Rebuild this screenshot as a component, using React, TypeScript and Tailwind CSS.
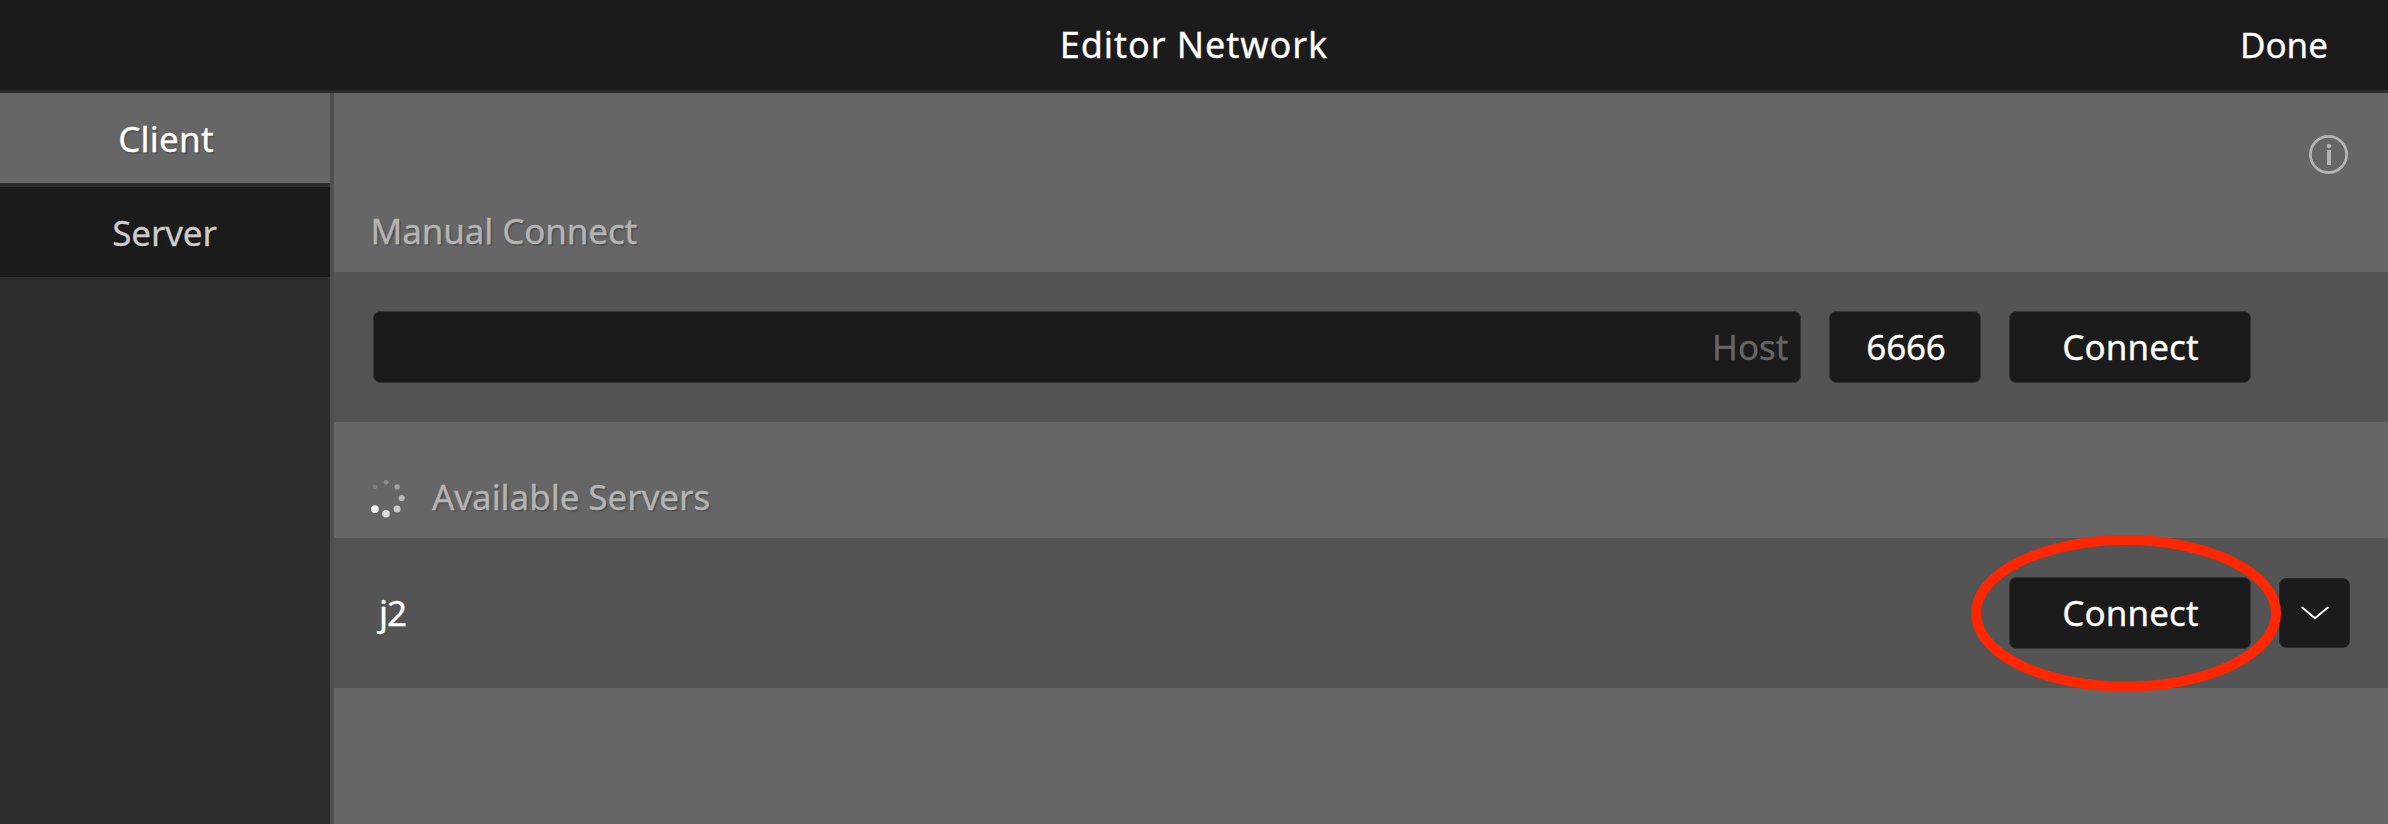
import type { ReactNode } from "react";

const box =
  "flex h-18 shrink-0 items-center justify-center rounded-[7px] border border-[#353535] bg-[#1b1b1b] pb-px";

function Connect() {
  return <button className={`${box} w-[242px] pl-px tracking-[0.12px] text-white`}>Connect</button>;
}

function Row({ children }: { children: ReactNode }) {
  return <div className="flex h-[150px] items-center bg-[#545454]">{children}</div>;
}

const dots = [
  { x: 8.9, y: 8.9, r: 2.2, c: "#7c7c7c" },
  { x: 20, y: 4.3, r: 2.4, c: "#8c8c8c" },
  { x: 31.1, y: 8.9, r: 2.7, c: "#a2a2a2" },
  { x: 35.7, y: 20, r: 3.1, c: "#b8b8b8" },
  { x: 31.1, y: 31.1, r: 3.5, c: "#c9c9c9" },
  { x: 20, y: 35.7, r: 3.8, c: "#dcdcdc" },
  { x: 8.9, y: 31.1, r: 3.9, c: "#efefef" },
];

export default function App() {
  return (
    <div className="flex h-[824px] w-[2388px] flex-col overflow-hidden bg-[#666666] font-['Noto_Sans',sans-serif] text-[35px] leading-none text-white [-webkit-text-stroke:0.3px]">
      <header className="grid h-[93px] shrink-0 grid-cols-3 items-center border-b-3 border-[#2c2c2c] bg-[#1b1b1b] pb-0.5">
        <h1 className="col-start-2 pt-0.5 text-center text-[36px] tracking-[0.94px]">Editor Network</h1>
        <button className="justify-self-end pr-15">Done</button>
      </header>

      <div className="flex min-h-0 flex-1">
        <nav className="flex w-[334px] shrink-0 flex-col border-r-4 border-[#4f4f4f] bg-[#2c2c2c]">
          <button className="mb-1 h-[90px] bg-[#666666] pl-0.5 tracking-[0.25px] [text-shadow:2px_2px_1px_#0000002e]">
            Client
          </button>
          <button className="h-[90px] bg-[#1b1b1b] pr-px tracking-[-0.17px] text-[#cccccc] [text-shadow:2px_2px_1px_#0000002e]">
            Server
          </button>
        </nav>

        <main className="flex flex-1 flex-col">
          <section className="flex h-[179px] flex-col">
            <div className="flex h-[114px] justify-end pt-[41px] pr-[39px]">
              <svg className="h-[41px] w-[41px]" viewBox="0 0 41 41" fill="none">
                <circle cx="20.5" cy="20.5" r="18.1" stroke="#b4b4b4" strokeWidth="2.7" />
                <circle cx="21" cy="12" r="2.2" fill="#b4b4b4" />
                <rect x="19" y="16" width="4" height="15" fill="#b4b4b4" />
              </svg>
            </div>
            <h2 className="pl-[36.5px] pt-[6px] tracking-[-0.11px] text-[#b4b4b4] [text-shadow:2px_2px_1px_#0000002e]">
              Manual Connect
            </h2>
          </section>

          <Row>
            <div className={`${box} ml-[39px] w-[1428px] !justify-end pr-[11.5px] text-[#666666]`}>Host</div>
            <div className={`${box} ml-7 w-[152px] pl-0.5 tracking-[-0.19px]`}>6666</div>
            <div className="ml-7 flex">
              <Connect />
            </div>
          </Row>

          <section className="flex h-[116px] items-center pt-9">
            <svg className="ml-8 h-10 w-10" viewBox="0 0 40 40">
              {dots.map((d, i) => (
                <circle key={i} cx={d.x} cy={d.y} r={d.r} fill={d.c} />
              ))}
            </svg>
            <h2 className="ml-[26px] pb-1 tracking-[-0.05px] text-[#b4b4b4] [text-shadow:2px_2px_1px_#0000002e]">
              Available Servers
            </h2>
          </section>

          <Row>
            <span className="ml-[45px] flex-1 pb-px tracking-[-0.95px]">j2</span>
            <div className="relative mr-7">
              <Connect />
              <svg
                className="pointer-events-none absolute -top-[42px] -left-[38px] h-[157px] w-[311px]"
                viewBox="0 0 311 157"
                fill="none"
              >
                <ellipse cx="155" cy="78.3" rx="150" ry="73.2" stroke="#ff2600" strokeWidth="10" />
              </svg>
            </div>
            <button className="mr-9.5 flex h-[70px] w-[71px] shrink-0 items-center justify-center rounded-[7px] border border-[#2a2a2a] bg-[#1b1b1b]">
              <svg className="h-4 w-7" viewBox="0 0 28 16" fill="none">
                <path d="M1.2 2.5 L14 13.2 L26.8 2.5" stroke="white" strokeWidth="1.9" strokeLinejoin="round" strokeLinecap="round" />
              </svg>
            </button>
          </Row>
        </main>
      </div>
    </div>
  );
}
